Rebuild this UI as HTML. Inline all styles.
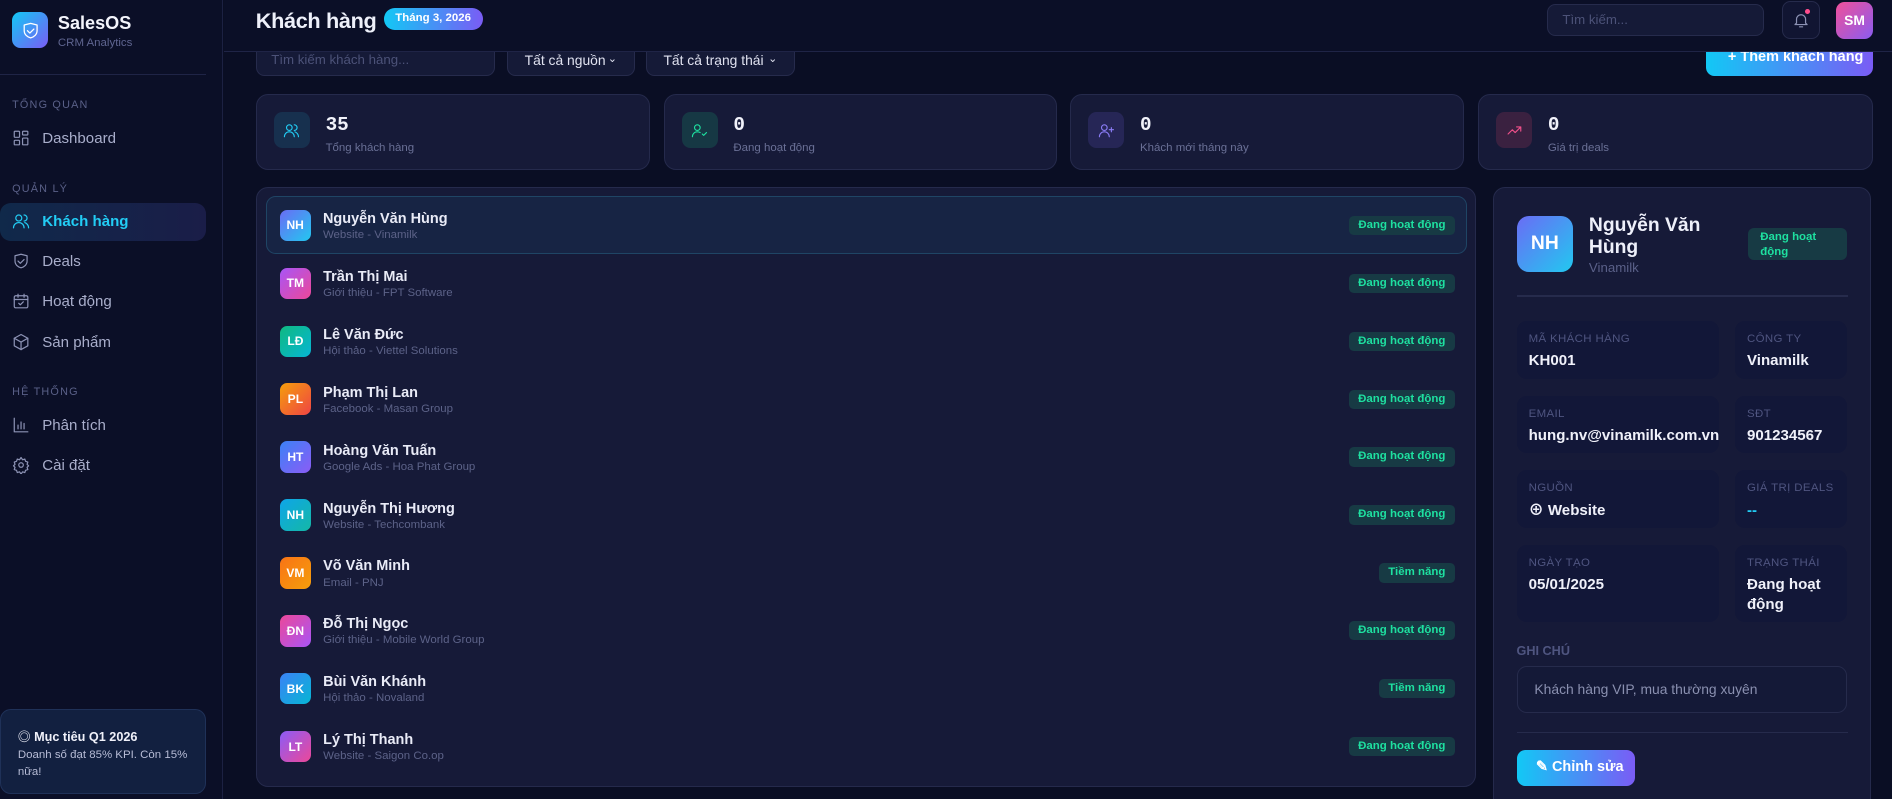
<!DOCTYPE html>
<html><head><meta charset="utf-8"><style>
*{box-sizing:border-box;margin:0;padding:0}
html,body{width:1892px;height:799px;overflow:hidden;background:#0a0e24}
body{font-family:"Liberation Sans","Noto Sans CJK SC",sans-serif;color:#e6e8f5}
#r{zoom:1.20663;width:1568px;height:662px;position:relative;overflow:hidden;background:#0a0e24}
.a{position:absolute}
.sb{left:0;top:0;width:185px;height:662px;background:#0b0f27;border-right:1px solid #1c2142}
.sec{font-size:9px;letter-spacing:1px;color:#5a6088;left:10px}
.nav{left:10px;font-size:12.5px;color:#a9aecb;display:flex;align-items:center;gap:10px}
.nav svg{width:15px;height:15px;fill:none;stroke:#8d93b5;stroke-width:1.6;stroke-linecap:round;stroke-linejoin:round}
.grad{background:linear-gradient(135deg,#12c8f5,#7a5cf5)}
.card{background:#161a38;border:1px solid #252a4c;border-radius:10px}
.stat .ib{position:absolute;left:14px;top:14px;width:30px;height:30px;border-radius:7px;display:flex;align-items:center;justify-content:center}
.stat .n{position:absolute;left:57px;top:16px;font-family:"Liberation Mono",monospace;font-weight:bold;font-size:16px;color:#f1f2fa}
.stat .l{position:absolute;left:57px;top:39px;font-size:9.5px;color:#6a7096}
.row{position:absolute;left:8px;width:995px;height:48px}
.row .av{position:absolute;left:11px;top:11px;width:26px;height:26px;border-radius:6px;color:#fff;font-weight:bold;font-size:10px;display:flex;align-items:center;justify-content:center}
.row .nm{position:absolute;left:47px;top:12px;font-size:12px;font-weight:bold;color:#e9ebf7}
.row .sub{position:absolute;left:47px;top:27px;font-size:9.5px;color:#5c6288}
.row .bd{position:absolute;right:10px;top:16px;height:16px;padding:0 8px;border-radius:4px;background:#173a44;color:#1ee0a0;font-size:9.5px;font-weight:bold;line-height:16px}
.f{position:absolute;background:#121738;border-radius:8px}
.f .k{position:absolute;left:10px;top:10px;font-size:9.5px;color:#4f5580;letter-spacing:.3px}
.f .v{position:absolute;left:10px;top:25px;font-size:12.5px;font-weight:bold;color:#f0f1fa;line-height:16px}
.ic{fill:none;stroke-width:1.6;stroke-linecap:round;stroke-linejoin:round}
</style></head><body><div id="r">
<!-- sidebar -->
<div class="a sb">
 <div class="a grad" style="left:10px;top:10px;width:30px;height:30px;border-radius:7px;display:flex;align-items:center;justify-content:center"><svg width="16" height="16" viewBox="0 0 24 24" class="ic" style="stroke:#fff"><path d="M4 5l8-2 8 2v7c0 5-4 8-8 9-4-1-8-4-8-9z"/><path d="M8 12l3 3 5-5"/></svg></div>
 <div class="a" style="left:48px;top:11px;font-size:15px;font-weight:bold;color:#f3f4fb">SalesOS</div>
 <div class="a" style="left:48px;top:31px;font-size:9.5px;color:#5f6590">CRM Analytics</div>
 <div class="a" style="left:0;top:61px;width:171px;height:1px;background:#1f2446"></div>
 <div class="a sec" style="top:82px">TỔNG QUAN</div>
 <div class="a nav" style="top:107px"><svg viewBox="0 0 24 24"><rect x="3" y="3" width="7" height="8" rx="1"/><rect x="14" y="3" width="7" height="5" rx="1"/><rect x="3" y="15" width="7" height="6" rx="1"/><rect x="14" y="12" width="7" height="9" rx="1"/></svg>Dashboard</div>
 <div class="a sec" style="top:152px">QUẢN LÝ</div>
 <div class="a" style="left:0;top:168px;width:171px;height:32px;border-radius:9px;background:linear-gradient(90deg,#10294a,#1a1d48)"></div>
 <div class="a nav" style="top:176px;color:#22cdf5;font-weight:bold"><svg viewBox="0 0 24 24" style="stroke:#22cdf5"><circle cx="9" cy="8" r="4"/><path d="M2 21c0-4 3-7 7-7s7 3 7 7"/><path d="M16 4a4 4 0 010 8M22 21c0-3-2-6-5-7"/></svg>Khách hàng</div>
 <div class="a nav" style="top:209px"><svg viewBox="0 0 24 24"><path d="M4 5l8-2 8 2v7c0 5-4 8-8 9-4-1-8-4-8-9z"/><path d="M8 12l3 3 5-5"/></svg>Deals</div>
 <div class="a nav" style="top:242px"><svg viewBox="0 0 24 24"><rect x="3" y="5" width="18" height="16" rx="2"/><path d="M3 10h18M8 3v4M16 3v4M9 15l2 2 4-4"/></svg>Hoạt động</div>
 <div class="a nav" style="top:276px"><svg viewBox="0 0 24 24"><path d="M12 2l9 5v10l-9 5-9-5V7z"/><path d="M3 7l9 5 9-5M12 12v10"/></svg>Sản phẩm</div>
 <div class="a sec" style="top:320px">HỆ THỐNG</div>
 <div class="a nav" style="top:345px"><svg viewBox="0 0 24 24"><path d="M3 3v18h18M8 17v-5M12 17V8M16 17v-7"/></svg>Phân tích</div>
 <div class="a nav" style="top:378px"><svg viewBox="0 0 24 24"><circle cx="12" cy="12" r="3"/><path d="M12 2l2 3 3-1 1 3 3 1-1 3 2 2-2 2 1 3-3 1-1 3-3-1-2 3-2-3-3 1-1-3-3-1 1-3-2-2 2-2-1-3 3-1 1-3 3 1z"/></svg>Cài đặt</div>
 <div class="a" style="left:0;top:588px;width:171px;height:70px;border-radius:9px;background:#122040;border:1px solid #1f3158">
  <div class="a" style="left:14px;top:13px;font-size:10.5px;font-weight:bold;color:#f0f1fa">◎ Mục tiêu Q1 2026</div>
  <div class="a" style="left:14px;top:30px;width:150px;font-size:9.5px;line-height:14px;color:#b7bcd6">Doanh số đạt 85% KPI. Còn 15% nữa!</div>
 </div>
</div>
<!-- content below header -->
<div class="a" style="left:212px;top:35px;width:198px;height:28px;border-radius:7px;background:#151a37;border:1px solid #262b4c;font-size:11px;color:#4c5278;padding:7px 12px">Tìm kiếm khách hàng...</div>
<div class="a" style="left:420px;top:35px;width:106px;height:28px;border-radius:7px;background:#151a37;border:1px solid #262b4c;font-size:11.5px;color:#e0e2f0;padding:7px 14px">Tất cả nguồn <span style="float:right;font-size:9px">⌄</span></div>
<div class="a" style="left:535px;top:35px;width:124px;height:28px;border-radius:7px;background:#151a37;border:1px solid #262b4c;font-size:11.5px;color:#e0e2f0;padding:7px 14px">Tất cả trạng thái <span style="float:right;font-size:9px">⌄</span></div>
<div class="a grad" style="left:1414px;top:35px;width:138px;height:28px;border-radius:7px;background:linear-gradient(90deg,#12c8f5,#7a5cf5);color:#fff;font-size:12px;font-weight:bold;padding:6px 0 0 18px">+ Thêm khách hàng</div>
<!-- header -->
<div class="a" style="left:186px;top:0;width:1382px;height:43px;background:#0b0f27;border-bottom:1px solid #1f2446">
 <div class="a" style="left:26px;top:7px;font-size:18px;font-weight:bold;color:#eef0fa;letter-spacing:-.3px">Khách hàng</div>
 <div class="a" style="left:132px;top:7px;width:82px;height:18px;border-radius:9px;background:linear-gradient(90deg,#12c8f5,#7a5cf5);color:#fff;font-size:9.5px;font-weight:bold;text-align:center;line-height:18px">Tháng 3, 2026</div>
 <div class="a" style="left:1096px;top:3px;width:180px;height:27px;border-radius:7px;background:#151a37;border:1px solid #262b4c;font-size:11px;color:#4c5278;padding:6px 12px">Tìm kiếm...</div>
 <div class="a" style="left:1291px;top:1px;width:31px;height:31px;border-radius:7px;background:#111532;border:1px solid #262b4c;display:flex;align-items:center;justify-content:center"><svg width="15" height="15" viewBox="0 0 24 24" class="ic" style="stroke:#8d93b5"><path d="M6 16V11a6 6 0 0112 0v5l2 2H4z"/><path d="M10 21h4"/></svg><div class="a" style="right:7px;top:6px;width:4px;height:4px;border-radius:50%;background:#ff4d8d"></div></div>
 <div class="a" style="left:1336px;top:2px;width:30px;height:30px;border-radius:7px;background:linear-gradient(135deg,#f0509a,#8a5cf0);color:#fff;font-weight:bold;font-size:11.5px;text-align:center;line-height:30px">SM</div>
</div>
<!-- stats -->
<div class="a card stat" style="left:212px;top:78px;width:327px;height:63px"><div class="ib" style="background:#17304e"><svg width="14" height="14" viewBox="0 0 24 24" class="ic" style="stroke:#22cdf5"><circle cx="9" cy="8" r="4"/><path d="M2 21c0-4 3-7 7-7s7 3 7 7M16 4a4 4 0 010 8M22 21c0-3-2-6-5-7"/></svg></div><div class="n">35</div><div class="l">Tổng khách hàng</div></div>
<div class="a card stat" style="left:550px;top:78px;width:326px;height:63px"><div class="ib" style="background:#163844"><svg width="14" height="14" viewBox="0 0 24 24" class="ic" style="stroke:#1ee0a0"><circle cx="9" cy="8" r="4"/><path d="M2 21c0-4 3-7 7-7 2 0 3 .5 4 1M16 17l2 2 4-4"/></svg></div><div class="n">0</div><div class="l">Đang hoạt động</div></div>
<div class="a card stat" style="left:887px;top:78px;width:326px;height:63px"><div class="ib" style="background:#262656"><svg width="14" height="14" viewBox="0 0 24 24" class="ic" style="stroke:#8a7cf5"><circle cx="9" cy="8" r="4"/><path d="M2 21c0-4 3-7 7-7s7 3 7 7M19 8v6M16 11h6"/></svg></div><div class="n">0</div><div class="l">Khách mới tháng này</div></div>
<div class="a card stat" style="left:1225px;top:78px;width:327px;height:63px"><div class="ib" style="background:#3a2140"><svg width="14" height="14" viewBox="0 0 24 24" class="ic" style="stroke:#f0508a"><path d="M3 17l6-6 4 4 8-8M15 7h6v6"/></svg></div><div class="n">0</div><div class="l">Giá trị deals</div></div>
<!-- list -->
<div class="a card" style="left:212px;top:155px;width:1011px;height:497px">
 <div class="row" style="top:7px;background:#172444;border:1px solid #1f4565;border-radius:8px"><div class="av" style="background:linear-gradient(135deg,#6a6cf5,#22c8f0);left:10px;top:10px">NH</div><div class="nm" style="top:11px;left:46px">Nguyễn Văn Hùng</div><div class="sub" style="top:26px;left:46px">Website - Vinamilk</div><div class="bd" style="top:15px;right:9px">Đang hoạt động</div></div>
 <div class="row" style="top:55px"><div class="av" style="background:linear-gradient(135deg,#a855f7,#ec4899)">TM</div><div class="nm">Trần Thị Mai</div><div class="sub">Giới thiệu - FPT Software</div><div class="bd">Đang hoạt động</div></div>
 <div class="row" style="top:103px"><div class="av" style="background:linear-gradient(135deg,#10b981,#06b6d4)">LĐ</div><div class="nm">Lê Văn Đức</div><div class="sub">Hội thảo - Viettel Solutions</div><div class="bd">Đang hoạt động</div></div>
 <div class="row" style="top:151px"><div class="av" style="background:linear-gradient(135deg,#f59e0b,#ef4444)">PL</div><div class="nm">Phạm Thị Lan</div><div class="sub">Facebook - Masan Group</div><div class="bd">Đang hoạt động</div></div>
 <div class="row" style="top:199px"><div class="av" style="background:linear-gradient(135deg,#3b82f6,#8b5cf6)">HT</div><div class="nm">Hoàng Văn Tuấn</div><div class="sub">Google Ads - Hoa Phat Group</div><div class="bd">Đang hoạt động</div></div>
 <div class="row" style="top:247px"><div class="av" style="background:linear-gradient(135deg,#0ea5e9,#14b8a6)">NH</div><div class="nm">Nguyễn Thị Hương</div><div class="sub">Website - Techcombank</div><div class="bd">Đang hoạt động</div></div>
 <div class="row" style="top:295px"><div class="av" style="background:linear-gradient(135deg,#f97316,#f59e0b)">VM</div><div class="nm">Võ Văn Minh</div><div class="sub">Email - PNJ</div><div class="bd">Tiềm năng</div></div>
 <div class="row" style="top:343px"><div class="av" style="background:linear-gradient(135deg,#ec4899,#a855f7)">ĐN</div><div class="nm">Đỗ Thị Ngọc</div><div class="sub">Giới thiệu - Mobile World Group</div><div class="bd">Đang hoạt động</div></div>
 <div class="row" style="top:391px"><div class="av" style="background:linear-gradient(135deg,#3b82f6,#06b6d4)">BK</div><div class="nm">Bùi Văn Khánh</div><div class="sub">Hội thảo - Novaland</div><div class="bd">Tiềm năng</div></div>
 <div class="row" style="top:439px"><div class="av" style="background:linear-gradient(135deg,#8b5cf6,#ec4899)">LT</div><div class="nm">Lý Thị Thanh</div><div class="sub">Website - Saigon Co.op</div><div class="bd">Đang hoạt động</div></div>
</div>
<!-- detail -->
<div class="a card" style="left:1237px;top:155px;width:314px;height:520px">
 <div class="a" style="left:19px;top:23px;width:47px;height:47px;border-radius:10px;background:linear-gradient(135deg,#6a6cf5,#22c8f0);color:#fff;font-weight:bold;font-size:16px;text-align:center;line-height:47px">NH</div>
 <div class="a" style="left:79px;top:22px;font-size:16px;font-weight:bold;line-height:19px;color:#eef0fa">Nguyễn Văn<br>Hùng</div>
 <div class="a" style="left:79px;top:60px;font-size:11px;color:#5a6088">Vinamilk</div>
 <div class="a" style="left:211px;top:33px;width:82px;height:27px;border-radius:5px;background:#173a44;color:#1ee0a0;font-size:9.5px;font-weight:bold;line-height:12px;padding:2px 10px">Đang hoạt<br>động</div>
 <div class="a" style="left:19px;top:89px;width:275px;height:1px;background:#262b4c"></div>
 <div class="f" style="left:19px;top:110px;width:168px;height:48px"><div class="k">MÃ KHÁCH HÀNG</div><div class="v">KH001</div></div>
 <div class="f" style="left:200px;top:110px;width:93px;height:48px"><div class="k">CÔNG TY</div><div class="v">Vinamilk</div></div>
 <div class="f" style="left:19px;top:172px;width:168px;height:48px"><div class="k">EMAIL</div><div class="v">hung.nv@vinamilk.com.vn</div></div>
 <div class="f" style="left:200px;top:172px;width:93px;height:48px"><div class="k">SĐT</div><div class="v">901234567</div></div>
 <div class="f" style="left:19px;top:234px;width:168px;height:48px"><div class="k">NGUỒN</div><div class="v">⊕ Website</div></div>
 <div class="f" style="left:200px;top:234px;width:93px;height:48px"><div class="k">GIÁ TRỊ DEALS</div><div class="v" style="color:#22cdf5">--</div></div>
 <div class="f" style="left:19px;top:296px;width:168px;height:64px"><div class="k">NGÀY TẠO</div><div class="v">05/01/2025</div></div>
 <div class="f" style="left:200px;top:296px;width:93px;height:64px"><div class="k">TRẠNG THÁI</div><div class="v">Đang hoạt<br>động</div></div>
 <div class="a" style="left:19px;top:378px;font-size:10.5px;font-weight:bold;color:#4f5580">GHI CHÚ</div>
 <div class="a" style="left:19px;top:396px;width:274px;height:39px;border-radius:8px;background:#141937;border:1px solid #262b4c;font-size:11.5px;color:#8a90b0;padding:12px 14px">Khách hàng VIP, mua thường xuyên</div>
 <div class="a" style="left:19px;top:451px;width:275px;height:1px;background:#262b4c"></div>
 <div class="a" style="left:19px;top:466px;width:98px;height:30px;border-radius:7px;background:linear-gradient(90deg,#12c8f5,#7a5cf5);color:#fff;font-weight:bold;font-size:12px;padding:7px 0 0 16px">✎ Chỉnh sửa</div>
</div>
</div></body></html>
